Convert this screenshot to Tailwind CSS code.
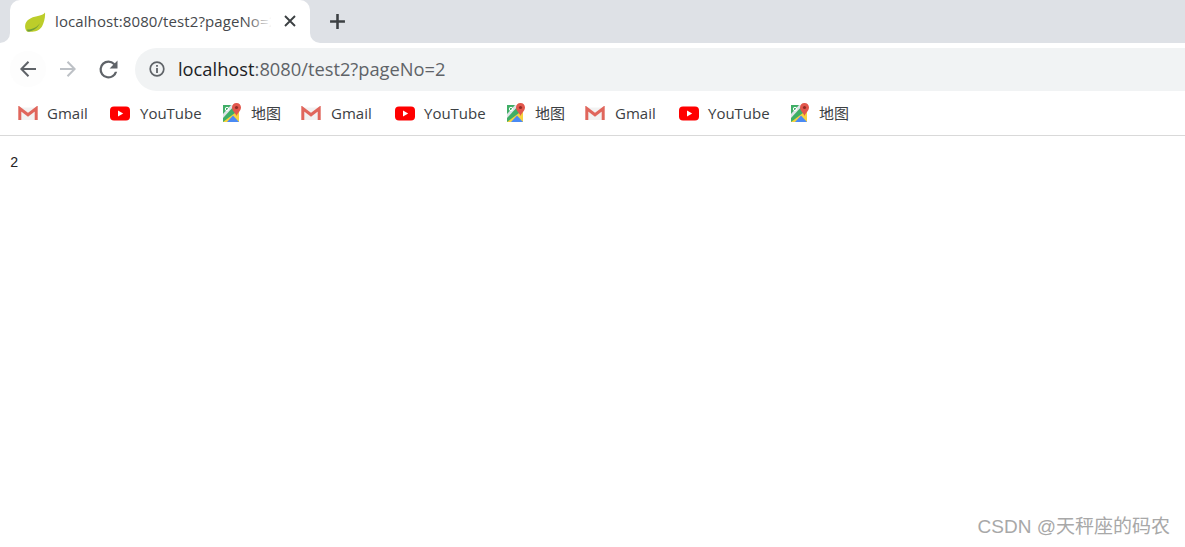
<!DOCTYPE html>
<html lang="en">
<head>
  <meta charset="UTF-8" />
  <title>localhost:8080/test2?pageNo=2</title>
  <script src="https://cdn.jsdelivr.net/npm/@tailwindcss/browser@4"></script>
</head>
<body class="relative w-[1185px] h-[547px] overflow-hidden bg-white font-['Open_Sans','Noto_Sans_CJK_SC',sans-serif]">

  <!-- tab strip -->
  <div class="flex h-[43px] bg-[#dee1e6]">
    <div class="relative flex items-center w-[300px] h-[43px] ml-[10px] pl-[14px] bg-white rounded-t-[10px]">
      <svg class="w-[22px] h-[20px] shrink-0" viewBox="0 0 22 20">
        <path d="M21 0.5C20 2.5 17 3.5 13 4.2C7 5.2 2 8 1.2 13C0.8 15.5 1.5 18 3 19.5C8 20.5 15 19.5 18 14.5C20 11 21.5 5 21 0.5Z" fill="#bccd2a"/>
        <path d="M3 17.5C8 17.8 13 15.5 16 11C14 16 8 19.5 3.6 19.6Z" fill="#6f9f3a"/>
      </svg>
      <span class="ml-[9px] w-[216px] overflow-hidden whitespace-nowrap text-[15px] text-[#45484c] tracking-[0.1px]">localhost:8080/test2?pageNo=2</span>
      <div class="absolute left-[236px] top-0 w-[26px] h-[43px] bg-gradient-to-r from-white/0 to-white"></div>
      <svg class="absolute left-[274px] top-[15px] w-[12px] h-[12px]" viewBox="0 0 12 12" fill="none" stroke="#3c4043" stroke-width="1.9">
        <path d="M1 1L11 11M11 1L1 11"/>
      </svg>
      <div class="absolute -left-[10px] bottom-0 w-[10px] h-[10px] bg-white"><div class="w-full h-full bg-[#dee1e6] rounded-br-[10px]"></div></div>
      <div class="absolute -right-[10px] bottom-0 w-[10px] h-[10px] bg-white"><div class="w-full h-full bg-[#dee1e6] rounded-bl-[10px]"></div></div>
    </div>
    <svg class="w-[17px] h-[17px] ml-[19px] mt-[13px]" viewBox="0 0 16 16" fill="none" stroke="#3c4043" stroke-width="2.4">
      <path d="M8 1V15M1 8H15"/>
    </svg>
  </div>

  <!-- toolbar -->
  <div class="flex items-center h-[49px] pt-[3px] pl-[10px]">
    <div class="flex items-center justify-center w-[36px] h-[36px] rounded-full bg-[#fdfdfd]">
      <svg class="w-[18px] h-[18px]" viewBox="0 0 18 18" fill="none" stroke="#5f6368" stroke-width="2">
        <path d="M17 9H2.5M9.5 1.8L2.4 9L9.5 16.2"/>
      </svg>
    </div>
    <div class="flex items-center justify-center w-[40px] h-[36px] ml-[2px]">
      <svg class="w-[18px] h-[18px]" viewBox="0 0 18 18" fill="none" stroke="#bdc1c6" stroke-width="2">
        <path d="M1 9H15.5M8.5 1.8L15.6 9L8.5 16.2"/>
      </svg>
    </div>
    <div class="flex items-center justify-center w-[40px] h-[36px]">
      <svg class="w-[27px] h-[27px]" viewBox="0 0 24 24">
        <path d="M17.65 6.35A7.96 7.96 0 0 0 12 4a8 8 0 1 0 7.73 10h-2.08A6 6 0 1 1 12 6c1.66 0 3.14.69 4.22 1.78L13 11h7V4l-2.35 2.35z" fill="#5f6368"/>
      </svg>
    </div>
    <div class="flex items-center flex-1 h-[43px] ml-[7px] pl-[14px] bg-[#f1f3f4] rounded-l-[22px]">
      <svg class="w-[16px] h-[16px]" viewBox="0 0 16 16" fill="none">
        <circle cx="8" cy="8" r="6.8" stroke="#5f6368" stroke-width="1.7"/>
        <path d="M8 7V12M8 4V5.8" stroke="#5f6368" stroke-width="1.8"/>
      </svg>
      <span class="ml-[13px] text-[18.3px] whitespace-nowrap text-[#5f6368]"><span class="text-[#202124]">localhost</span>:8080/test2?pageNo=2</span>
    </div>
  </div>

  <!-- bookmarks bar -->
  <div class="flex items-center h-[44px] pl-[18px] pb-[1px] border-b border-[#d9d9d9] text-[15px] text-[#3c4043]">
    <div class="flex items-center w-[92px]">
      <svg class="w-[20px] h-[15px]" viewBox="0 0 20 15"><use href="#gmail"/></svg>
      <span class="ml-[9px]">Gmail</span>
    </div>
    <div class="flex items-center w-[112px]">
      <svg class="w-[20px] h-[15px]" viewBox="0 0 20 15"><use href="#yt"/></svg>
      <span class="ml-[10px]">YouTube</span>
    </div>
    <div class="flex items-center w-[79px]">
      <svg class="w-[20px] h-[20px]" viewBox="0 0 20 20"><use href="#maps"/></svg>
      <span class="ml-[9px]">地图</span>
    </div>
    <div class="flex items-center w-[94px]">
      <svg class="w-[20px] h-[15px]" viewBox="0 0 20 15"><use href="#gmail"/></svg>
      <span class="ml-[10px]">Gmail</span>
    </div>
    <div class="flex items-center w-[111px]">
      <svg class="w-[20px] h-[15px]" viewBox="0 0 20 15"><use href="#yt"/></svg>
      <span class="ml-[9px]">YouTube</span>
    </div>
    <div class="flex items-center w-[79px]">
      <svg class="w-[20px] h-[20px]" viewBox="0 0 20 20"><use href="#maps"/></svg>
      <span class="ml-[9px]">地图</span>
    </div>
    <div class="flex items-center w-[94px]">
      <svg class="w-[20px] h-[15px]" viewBox="0 0 20 15"><use href="#gmail"/></svg>
      <span class="ml-[10px]">Gmail</span>
    </div>
    <div class="flex items-center w-[111px]">
      <svg class="w-[20px] h-[15px]" viewBox="0 0 20 15"><use href="#yt"/></svg>
      <span class="ml-[9px]">YouTube</span>
    </div>
    <div class="flex items-center">
      <svg class="w-[20px] h-[20px]" viewBox="0 0 20 20"><use href="#maps"/></svg>
      <span class="ml-[9px]">地图</span>
    </div>
  </div>

  <!-- page content -->
  <div class="pl-[10px] pt-[17px] text-[14px] leading-[20px] text-[#222222] font-['Liberation_Mono',monospace]">2</div>

  <div class="absolute right-[15px] bottom-[7px] text-[19px] leading-[26px] text-[#a8a8a8] font-['Liberation_Sans','Noto_Sans_CJK_SC',sans-serif]">CSDN @天秤座的码农</div>

  <!-- shared bookmark icons -->
  <svg class="hidden">
    <defs>
      <g id="gmail">
        <path d="M1 1.5H19V14H1Z" fill="#f2f2f2"/>
        <path d="M1.8 14V2.5L10 8.8L18.2 2.5V14" fill="none" stroke="#e0665c" stroke-width="3"/>
      </g>
      <g id="yt">
        <rect x="0" y="0.5" width="20" height="14" rx="4" fill="#ff0000"/>
        <path d="M8 4.5L13.2 7.5L8 10.5Z" fill="#ffffff"/>
      </g>
      <g id="maps">
        <path d="M1 2H17V19H1Z" fill="#3fae66"/>
        <path d="M1 19L17 7V19Z" fill="#f7d23e"/>
        <path d="M5 19L11 12.5L17 19Z" fill="#4a8af4"/>
        <path d="M9 2L1 11V15L13 2Z" fill="#dfe4e7"/>
        <circle cx="5" cy="6" r="1.7" fill="none" stroke="#ffffff" stroke-width="1"/>
        <path d="M14.5 0C11.8 0 10 2 10 4.4C10 7.5 13.3 9.5 14.5 13C15.7 9.5 19 7.5 19 4.4C19 2 17.2 0 14.5 0Z" fill="#e2574c"/>
        <circle cx="14.5" cy="4.5" r="1.6" fill="#8f2b25"/>
      </g>
    </defs>
  </svg>
</body>
</html>
